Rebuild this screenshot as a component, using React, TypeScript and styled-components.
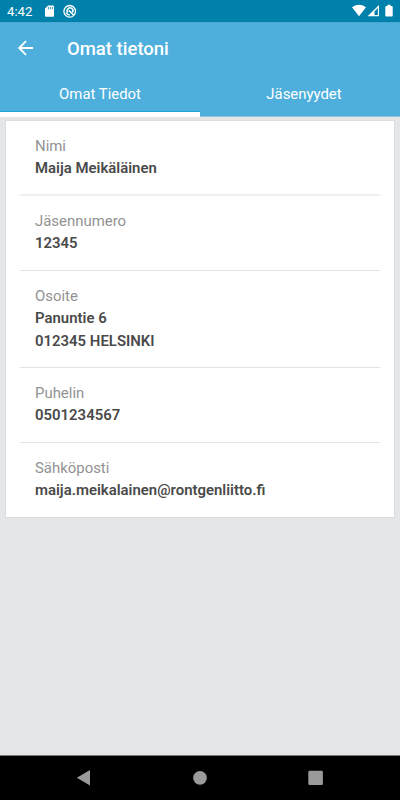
import React from "react";
import styled, { createGlobalStyle } from "styled-components";

const GlobalStyle = createGlobalStyle`
  * { box-sizing: border-box; }
  body { margin: 0; font-family: Roboto, sans-serif; }
`;

const Screen = styled.div`
  display: flex;
  flex-direction: column;
  width: 400px;
  height: 800px;
  background: #e5e6e8;
`;

const StatusBar = styled.div`
  display: flex;
  align-items: center;
  height: 22px;
  padding: 0 6px 0 7px;
  background: #0081ab;
  color: #fff;
  flex: none;
`;

const Clock = styled.span`
  width: 36px;
  font-size: 13.2px;
  line-height: 22px;
  padding-top: 1px;
`;

const Spacer = styled.div`
  flex: 1;
`;

const Header = styled.header`
  height: 95px;
  flex: none;
  background: #4eafdc;
  border-top: 1px solid #48a7d3;
  color: #fff;
`;

const TitleBar = styled.div`
  display: flex;
  align-items: center;
  height: 51px;
  padding-left: 17px;
`;

const BackIcon = styled.svg`
  width: 17px;
  height: 16px;
  margin: 0 33px 2px 0;
`;

const Title = styled.h1`
  margin: 0;
  font-size: 18.5px;
  font-weight: 500;
  line-height: 24px;
`;

const Tabs = styled.nav`
  display: grid;
  grid-template-columns: 1fr 1fr;
  height: 43px;
`;

const Tab = styled.div<{ $active?: boolean; $shift?: number }>`
  display: flex;
  justify-content: center;
  padding: 10px 0 0 ${(p) => p.$shift ?? 0}px;
  font-size: 14.9px;
  line-height: 20px;
  box-shadow: ${(p) =>
    p.$active ? "inset 0 -5px 0 #fff, inset 0 -6px 0 #1da3d6" : "inset 0 -1px 0 #8fc5de"};
`;

const Card = styled.main`
  width: 388px;
  margin: 4px 0 0 6px;
  padding: 0 14px;
  background: #fff;
  box-shadow: 0 0 1px 1px rgba(0, 0, 0, 0.035);
`;

const Row = styled.section<{ $height: number }>`
  height: ${(p) => p.$height}px;
  padding: 14px 15px 0;
  font-size: 14.93px;
  line-height: 22.4px;
  color: #4a4a4a;
  border-bottom: 1px solid #e2e2e3;
  &:first-child {
    border-bottom: 2px solid #efefef;
  }
  &:last-child {
    border-bottom: 0;
  }
`;

const Label = styled.div`
  color: #929292;
`;

const Value = styled.div`
  font-weight: 600;
`;

const NavBar = styled.footer`
  height: 45px;
  margin-top: auto;
  background: #000;
  border-top: 1px solid #747677;
`;

const NavIcons = styled.svg`
  display: block;
`;

const rows = [
  { label: "Nimi", values: ["Maija Meikäläinen"], height: 74.75 },
  { label: "Jäsennumero", values: ["12345"], height: 75 },
  { label: "Osoite", values: ["Panuntie 6", "012345 HELSINKI"], height: 97.25 },
  { label: "Puhelin", values: ["0501234567"], height: 75 },
  { label: "Sähköposti", values: ["maija.meikalainen@rontgenliitto.fi"], height: 74 },
];

export default function App() {
  return (
    <Screen>
      <GlobalStyle />
      <StatusBar>
        <Clock>4:42</Clock>
        <svg width="36" height="22" viewBox="43 0 36 22">
          <path d="M48.2 5.4h4.8q1 0 1 1v9.4q0 1-1 1h-7q-1 0-1-1V8.5z" fill="#fff" />
          <path d="M48.4 7v2.3M50.4 7v2.3M52.4 7v2.3" stroke="#0081ab" strokeWidth=".8" />
          <circle cx="69.7" cy="11.3" r="5.8" fill="none" stroke="#fff" strokeWidth="1.3" />
          <path
            d="M67.8 12.6a2.9 2.9 0 1 1 4.6-.2M68.8 10.4l4.8 4.6M66 12.6q1.2 2.2 3.8 2.4"
            fill="none"
            stroke="#fff"
            strokeWidth="1.5"
          />
        </svg>
        <Spacer />
        <svg width="44" height="22" viewBox="350 0 44 22">
          <path d="M352 7.3Q359 2.4 366 7.3L359 16.3z" fill="#fff" />
          <path d="M379 5v11.3h-11.5z" fill="#fff" />
          <path d="M377.9 8v7.1h-3.4v-3.5z" fill="#0081ab" />
          <path d="M387.5 4.8h3v1.1h1.2q1 0 1 1v8.6q0 1-1 1h-5.4q-1 0-1-1V6.9q0-1 1-1h1.2z" fill="#fff" />
        </svg>
      </StatusBar>
      <Header>
        <TitleBar>
          <BackIcon viewBox="0 0 17 16" fill="none" stroke="#fff" strokeWidth="1.8">
            <path d="M16 8H2M9 1.2L2.2 8l6.8 6.8" />
          </BackIcon>
          <Title>Omat tietoni</Title>
        </TitleBar>
        <Tabs>
          <Tab $active>Omat Tiedot</Tab>
          <Tab $shift={8}>Jäsenyydet</Tab>
        </Tabs>
      </Header>
      <Card>
        {rows.map((row) => (
          <Row key={row.label} $height={row.height}>
            <Label>{row.label}</Label>
            {row.values.map((value) => (
              <Value key={value}>{value}</Value>
            ))}
          </Row>
        ))}
      </Card>
      <NavBar>
        <NavIcons width="400" height="44" viewBox="0 756 400 44" fill="#9a9a9a">
          <path d="M76.8 777.8L90 770v15.4z" />
          <circle cx="200" cy="777.8" r="6.9" />
          <rect x="308.3" y="770.8" width="14.6" height="14.2" rx="1.2" />
        </NavIcons>
      </NavBar>
    </Screen>
  );
}
